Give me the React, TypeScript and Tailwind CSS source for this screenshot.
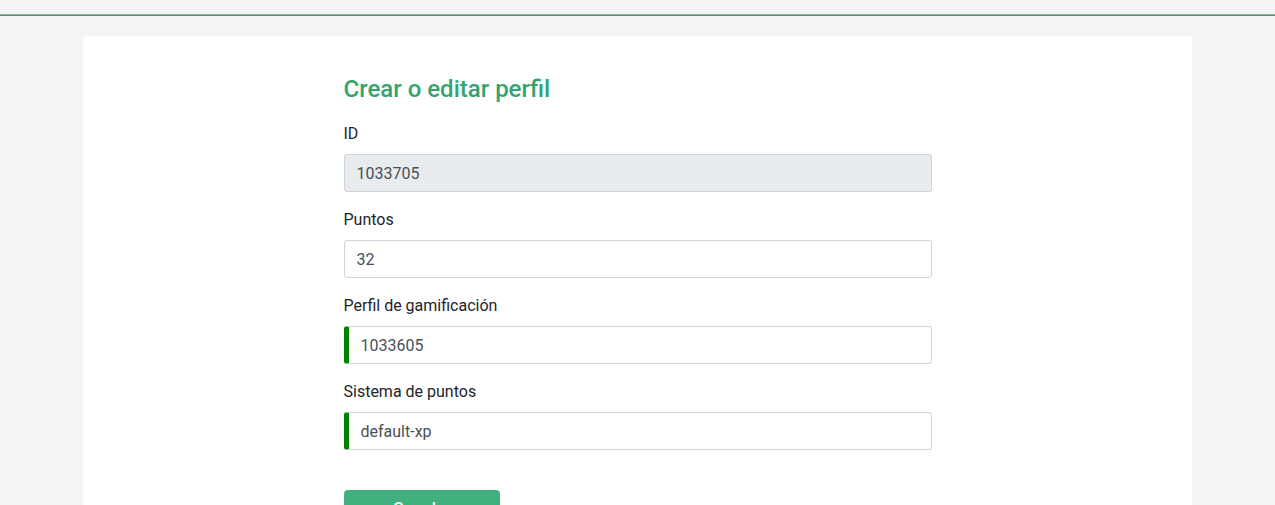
export default function App() {
  const fields = [
    { label: 'ID', value: '1033705', readOnly: true, mark: false },
    { label: 'Puntos', value: '32', readOnly: false, mark: false },
    { label: 'Perfil de gamificación', value: '1033605', readOnly: false, mark: true },
    { label: 'Sistema de puntos', value: 'default-xp', readOnly: false, mark: true },
  ];

  return (
    <div className="min-h-screen bg-[#f4f4f4] font-['Roboto',sans-serif]">
      {/* top bar edge */}
      <div className="h-[15px] border-b border-[#a8a8a8]" />
      <div className="h-px bg-[#3a9e6c]" />

      <div className="px-[83px] pt-[20px]">
        <div className="rounded-[4px] bg-white pb-10 pt-[39px]">
          <div className="mx-auto w-[588px]">
            <h2 className="mb-[19px] text-[24px] font-medium leading-[28px] text-[#35a36f]">
              Crear o editar perfil
            </h2>

            {fields.map(f => (
              <div key={f.label} className="mb-[16px]">
                <label className="mb-[8px] block text-[16px] leading-[24px] text-[#212529]">
                  {f.label}
                </label>
                <input
                  readOnly
                  value={f.value}
                  className={`block h-[38px] w-full rounded-[3px] border border-[#ced4da] px-3 text-[16px] text-[#495057] outline-none ${
                    f.readOnly ? 'bg-[#e9ecef]' : 'bg-white'
                  } ${f.mark ? 'border-l-[5px] border-l-[#008000]' : ''}`}
                />
              </div>
            ))}

            <button className="mt-[24px] h-[38px] w-[156px] rounded-[4px] bg-[#41b07e] text-[16px] font-medium text-white">
              Guardar
            </button>
          </div>
        </div>
      </div>
    </div>
  );
}
